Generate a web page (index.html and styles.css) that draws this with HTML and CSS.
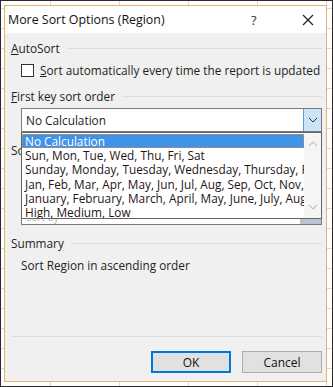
FILE: index.html
```html
<!DOCTYPE html>
<html lang="en">
<head>
  <meta charset="UTF-8" />
  <title>More Sort Options (Region)</title>
  <link rel="stylesheet" href="styles.css">
</head>
<body>
  <div class="screen">
    <div class="dialog">
      <div class="titlebar">
        <span class="title">More Sort Options (Region)</span>
        <span class="help">?</span>
        <span class="close">
          <svg width="12" height="12" viewBox="0 0 12 12"><path d="M1 1L11 11M11 1L1 11" stroke="#222" stroke-width="1.2" fill="none"/></svg>
        </span>
      </div>

      <div class="body">
        <div class="group-head"><span><u>A</u>utoSort</span></div>
        <label class="check-row">
          <span class="checkbox"></span>
          <span><u>S</u>ort automatically every time the report is updated</span>
        </label>

        <div class="group-head"><span><u>F</u>irst key sort order</span></div>
        <div class="combo-wrap">
          <div class="combo">
            <span class="combo-text">No Calculation</span>
            <span class="combo-btn">
              <svg width="10" height="6" viewBox="0 0 10 6"><path d="M1 1L5 5L9 1" stroke="#333" stroke-width="1" fill="none"/></svg>
            </span>
          </div>

          <!-- open list -->
          <div class="dropdown">
            <div class="items">
              <div class="item selected">No Calculation</div>
              <div class="item">Sun, Mon, Tue, Wed, Thu, Fri, Sat</div>
              <div class="item">Sunday, Monday, Tuesday, Wednesday, Thursday, Friday, Saturday</div>
              <div class="item">Jan, Feb, Mar, Apr, May, Jun, Jul, Aug, Sep, Oct, Nov, Dec</div>
              <div class="item">January, February, March, April, May, June, July, August</div>
              <div class="item">High, Medium, Low</div>
            </div>
            <div class="scrollbar">
              <svg width="10" height="6" viewBox="0 0 10 6"><path d="M1 5L5 1L9 5" stroke="#c2c2c2" stroke-width="1.2" fill="none"/></svg>
              <svg width="10" height="6" viewBox="0 0 10 6"><path d="M1 1L5 5L9 1" stroke="#c2c2c2" stroke-width="1.2" fill="none"/></svg>
            </div>
          </div>
        </div>

        <div class="group-head sort-head"><span>Sort by</span></div>
        <div class="listbox">
          <span class="listbox-text">Sort by</span>
          <span class="listbox-btn"></span>
        </div>

        <div class="group-head summary-head"><span>Summary</span></div>
        <p class="summary">Sort Region in ascending order</p>

        <div class="footer">
          <button class="btn default">OK</button>
          <button class="btn">Cancel</button>
        </div>
      </div>
    </div>
  </div>
</body>
</html>
```

FILE: styles.css
```css
* {
  margin: 0;
  padding: 0;
  box-sizing: border-box;
}

body {
  font-family: "Open Sans", "Noto Sans", sans-serif;
  font-size: 11.8px;
  color: #1e1e1e;
}

.screen {
  width: 333px;
  height: 387px;
  border: 1px solid #2a2a2a;
  background-color: #fff;
  background-image:
    linear-gradient(to right, #d8d8d8 1px, transparent 1px),
    linear-gradient(to bottom, #d8d8d8 1px, transparent 1px);
  background-size: 69px 20px;
  background-position: 49px 7px;
  padding: 4px 0 0 3px;
}

.dialog {
  width: 323px;
  height: 377px;
  border: 1px solid #e9b26b;
  background-color: #f0f0f0;
  display: flex;
  flex-direction: column;
}

.titlebar {
  height: 27px;
  background-color: #fff;
  display: flex;
  align-items: center;
  padding-left: 3px;
}

.title {
  font-size: 12.4px;
  flex: 1;
  color: #111;
}

.help {
  font-size: 13px;
  width: 14px;
  margin-right: 37px;
  color: #333;
}

.close {
  width: 24px;
  display: flex;
}

.body {
  flex: 1;
  display: flex;
  flex-direction: column;
  padding: 7px 4px 8px 6px;
}

.group-head {
  display: flex;
  align-items: center;
  line-height: 16px;
  height: 16px;
  flex-shrink: 0;
}

.group-head::after {
  content: "";
  flex: 1;
  height: 1px;
  background-color: #dcdcdc;
  margin-left: 7px;
}

.check-row {
  display: flex;
  align-items: center;
  margin: 6px 0 10px 10px;
  line-height: 16px;
  white-space: nowrap;
}

.checkbox {
  width: 13px;
  height: 13px;
  border: 1px solid #333;
  background-color: #fff;
  margin-right: 6px;
  flex-shrink: 0;
}

.combo-wrap {
  position: relative;
  margin: 4px 0 0 10px;
}

.combo {
  height: 24px;
  border: 1px solid #7a7a7a;
  background-color: #fff;
  display: flex;
  align-items: center;
}

.combo-text {
  flex: 1;
  padding-left: 4px;
}

.combo-btn {
  width: 18px;
  height: 22px;
  background-color: #cce4f7;
  border-left: 1px solid #569de5;
  display: flex;
  align-items: center;
  justify-content: center;
}

.dropdown {
  position: absolute;
  top: 100%;
  left: 0;
  right: 0;
  height: 87px;
  background-color: #fff;
  border: 1px solid #646464;
  display: flex;
  z-index: 1;
}

.items {
  flex: 1;
  overflow: hidden;
  padding-top: 1px;
}

.item {
  height: 14.2px;
  line-height: 14px;
  white-space: nowrap;
  padding-left: 3px;
  color: #1f1414;
}

.item.selected {
  background-color: #3f93ea;
  color: #fff;
  outline: 1px dotted #e08a2a;
  outline-offset: -1px;
}

.scrollbar {
  width: 17px;
  background-color: #f5f5f5;
  display: flex;
  flex-direction: column;
  justify-content: space-between;
  align-items: center;
  padding: 8px 0 8px;
}

.sort-head {
  margin-top: 10px;
}

.listbox {
  height: 64px;
  flex-shrink: 0;
  margin: 3px 0 0 10px;
  border: 1px solid #7a7a7a;
  background-color: #fff;
  display: flex;
  align-items: flex-end;
}

.listbox-text {
  flex: 1;
  color: #b5b5b5;
  font-size: 10px;
  padding-left: 4px;
}

.listbox-btn {
  width: 21px;
  height: 8px;
  background-color: #b8c4d4;
}

.summary-head {
  margin-top: 10px;
}

.summary {
  margin: 6px 0 0 10px;
  line-height: 16px;
}

.footer {
  margin-top: auto;
  border-top: 1px solid #dcdcdc;
  padding-top: 14px;
  display: flex;
  justify-content: flex-end;
  gap: 11px;
}

.btn {
  width: 80px;
  height: 22px;
  font-family: inherit;
  font-size: 12px;
  color: #111;
  background-color: #e1e1e1;
  border: 1px solid #adadad;
}

.btn.default {
  border: 2px solid #0078d7;
}
```
